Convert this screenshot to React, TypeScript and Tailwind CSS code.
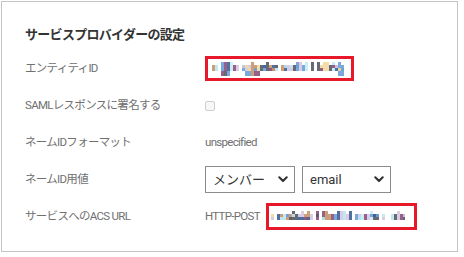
import React from 'react'

const PALETTE = ['#8b4f7e', '#6a9fd8', '#c8956a', '#555a66', '#b9e6f2', '#f1d9a0', '#3f5f95', '#d7c6e0', '#c4ecf7']

// obfuscated url mosaic, deterministic
function Mosaic({ width, seed, tall }: { width: number; seed: number; tall: number[] }) {
  let s = seed
  const rnd = () => {
    s = (s * 1103515245 + 12345) % 2147483648
    return s / 2147483648
  }
  const cells: { x: number; y: number; h: number; c: string }[] = []
  for (let x = 0; x < width; x += 3) {
    if (rnd() < 0.12) continue
    const base = PALETTE[Math.floor(rnd() * PALETTE.length)]
    const top = rnd() < 0.4 ? 0 : 3
    cells.push({ x, y: top, h: 9 - top, c: base })
    if (rnd() < 0.45) {
      cells.push({ x, y: 3 + Math.floor(rnd() * 2) * 3, h: 3, c: PALETTE[Math.floor(rnd() * PALETTE.length)] })
    }
    if (tall.some(t => Math.abs(t - x) < 4)) {
      cells.push({ x, y: 9, h: 5, c: PALETTE[Math.floor(rnd() * 4)] })
    }
  }
  return (
    <svg width={width} height={14} viewBox={`0 0 ${width} 14`} className="block">
      {cells.map((c, i) => (
        <rect key={i} x={c.x} y={c.y} width={3} height={c.h} fill={c.c} opacity={0.9} />
      ))}
    </svg>
  )
}

function Chevron() {
  return (
    <svg width="10" height="7" viewBox="0 0 10 7" className="shrink-0">
      <path d="M1.3 1.3 L5 5 L8.7 1.3" fill="none" stroke="#333" strokeWidth="2.1" strokeLinecap="round" strokeLinejoin="round" />
    </svg>
  )
}

function FakeSelect({ label, width }: { label: string; width: string }) {
  return (
    <div className={`${width} h-[27px] border border-[#8c8c8c] bg-white flex items-center pl-[7px] pr-[6px]`}>
      <span className="flex-1 text-[13px] text-[#333]">{label}</span>
      <Chevron />
    </div>
  )
}

function Row({ label, children }: { label: string; children: React.ReactNode }) {
  return (
    <div className="h-[37px] flex items-center">
      <div className="w-[180px] shrink-0 text-[11.5px] tracking-[-0.7px] text-[#707070]">{label}</div>
      <div className="flex items-center">{children}</div>
    </div>
  )
}

export default function App() {
  return (
    <div className="w-[464px] h-[257px] bg-white" style={{ fontFamily: 'Roboto, "Noto Sans CJK JP", sans-serif' }}>
      <div className="mt-px ml-px w-[457px] h-[251px] border border-[#c4c4c4] pl-[23px]">
        <div className="mt-[23px] h-[20px] flex items-center text-[13px] tracking-[-0.7px] font-bold text-[#333]">
          サービスプロバイダーの設定
        </div>
        <div className="mt-[5px] flex flex-col">
          <Row label="エンティティID">
            <div className="w-[149px] h-[25px] border-[3px] border-[#e8182b] flex items-center pl-[4px] pt-[2px] mt-[-1px]">
              <Mosaic width={132} seed={7} tall={[12, 36, 42, 129, 132]} />
            </div>
          </Row>
          <Row label="SAMLレスポンスに署名する">
            <div className="w-[10px] h-[10px] border border-[#cfcfcf] rounded-[2px] bg-[#f7f7f7]" />
          </Row>
          <Row label="ネームIDフォーマット">
            <span className="text-[11.5px] tracking-[-0.7px] text-[#707070]">unspecified</span>
          </Row>
          <Row label="ネームID用値">
            <div className="flex gap-[7px]">
              <FakeSelect label="メンバー" width="w-[90px]" />
              <FakeSelect label="email" width="w-[89px]" />
            </div>
          </Row>
          <Row label="サービスへのACS URL">
            <span className="text-[11.5px] tracking-[-0.7px] text-[#707070]">HTTP-POST</span>
            <div className="ml-[6px] w-[151px] h-[27px] border-[3px] border-[#e8182b] flex items-center pl-[2px] pt-[3px]">
              <Mosaic width={134} seed={21} tall={[]} />
            </div>
          </Row>
        </div>
      </div>
    </div>
  )
}
